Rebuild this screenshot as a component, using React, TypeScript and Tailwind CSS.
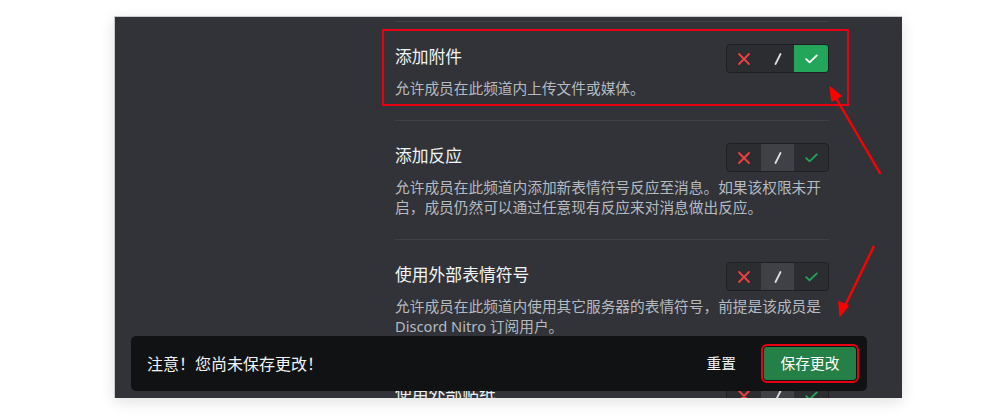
const font = { fontFamily: '"Noto Sans", "Noto Sans CJK SC", sans-serif' };

const XIcon = () => (
  <svg width="12" height="12" viewBox="0 0 12 12" fill="none">
    <path d="M1 1 11 11M11 1 1 11" stroke="#f23f43" strokeWidth="1.8" strokeLinecap="round" />
  </svg>
);

const SlashIcon = () => (
  <svg width="8" height="12" viewBox="0 0 8 12" fill="none">
    <path d="M6.5 1 1.5 11" stroke="#dbdee1" strokeWidth="1.8" strokeLinecap="round" />
  </svg>
);

const CheckIcon = ({ color }: { color: string }) => (
  <svg width="13" height="10" viewBox="0 0 13 10" fill="none">
    <path d="M1.2 5.2 4.6 8.4 11.8 1.4" stroke={color} strokeWidth="1.8" strokeLinecap="round" strokeLinejoin="round" />
  </svg>
);

const Toggle = ({ state }: { state: 'allow' | 'neutral' }) => (
  <div className="flex h-[29px] w-[103px] shrink-0 overflow-hidden rounded-[4px] border border-[#1e1f22] bg-[#2b2d31]">
    <span className="flex flex-1 items-center justify-center">
      <XIcon />
    </span>
    <span className={`flex flex-1 items-center justify-center ${state === 'neutral' ? 'bg-[#3f4147]' : ''}`}>
      <SlashIcon />
    </span>
    <span className={`flex flex-1 items-center justify-center ${state === 'allow' ? 'bg-[#23a55a]' : ''}`}>
      <CheckIcon color={state === 'allow' ? '#ffffff' : '#23a55a'} />
    </span>
  </div>
);

const rows = [
  { title: '添加附件', desc: '允许成员在此频道内上传文件或媒体。', state: 'allow' as const },
  {
    title: '添加反应',
    desc: '允许成员在此频道内添加新表情符号反应至消息。如果该权限未开启，成员仍然可以通过任意现有反应来对消息做出反应。',
    state: 'neutral' as const,
  },
  {
    title: '使用外部表情符号',
    desc: '允许成员在此频道内使用其它服务器的表情符号，前提是该成员是 Discord Nitro 订阅用户。',
    state: 'neutral' as const,
  },
  { title: '使用外部贴纸', desc: '允许成员在此频道内使用其它服务器的贴纸，前提是该成员是 Discord Nitro 订阅用户。', state: 'neutral' as const },
];

export default function App() {
  return (
    <div className="relative h-[418px] w-[1000px] overflow-hidden bg-white pl-[114px] pt-[16px]" style={font}>
      <div className="relative h-[382px] w-[788px] overflow-hidden border-t border-l border-[#c9cacc] bg-[#313338] shadow-[0_4px_14px_rgba(0,0,0,0.12)]">
        <div className="ml-[280px] w-[434px] pt-[4px]">
          {rows.map((r) => (
            <div key={r.title} className="border-t border-[#3f4147] pb-[22px] pt-[22px]">
              <div className="flex h-[29px] items-center justify-between">
                <span className="pb-[3px] text-[16.8px] leading-6 text-[#f2f3f5]">{r.title}</span>
                <Toggle state={r.state} />
              </div>
              <p className="mt-[5px] text-[14.7px] leading-[20px] text-[#b5bac1]">{r.desc}</p>
            </div>
          ))}
        </div>

        <div className="absolute bottom-[7px] left-[16px] flex h-[55px] w-[736px] items-center justify-between rounded-[5px] bg-[#111214] pl-[16px] pr-[11px]">
          <span className="text-[16px] text-[#f2f3f5]">注意！您尚未保存更改！</span>
          <div className="flex items-center gap-[28px]">
            <span className="text-[14.7px] text-[#f2f3f5]">重置</span>
            <button className="h-[33px] w-[92px] rounded-[3px] bg-[#248046] text-[14.7px] text-white outline-2 outline-offset-[1px] outline-[#e60012]">
              保存更改
            </button>
          </div>
        </div>
      </div>

      <div className="absolute left-[382px] top-[29px] h-[77px] w-[467px] border-2 border-[#e60012]" />

      <svg className="absolute left-0 top-0" width="1000" height="418" viewBox="0 0 1000 418" fill="none">
        <path d="M880.5 174 833 93" stroke="#ff0000" strokeWidth="2.4" />
        <path d="M830 87 832 101 841 96Z" fill="#ff0000" stroke="#ff0000" strokeWidth="1.5" strokeLinejoin="round" />
        <path d="M874 246 843 310" stroke="#ff0000" strokeWidth="2.4" />
        <path d="M840 316 839 302 848 306Z" fill="#ff0000" stroke="#ff0000" strokeWidth="1.5" strokeLinejoin="round" />
      </svg>
    </div>
  );
}
